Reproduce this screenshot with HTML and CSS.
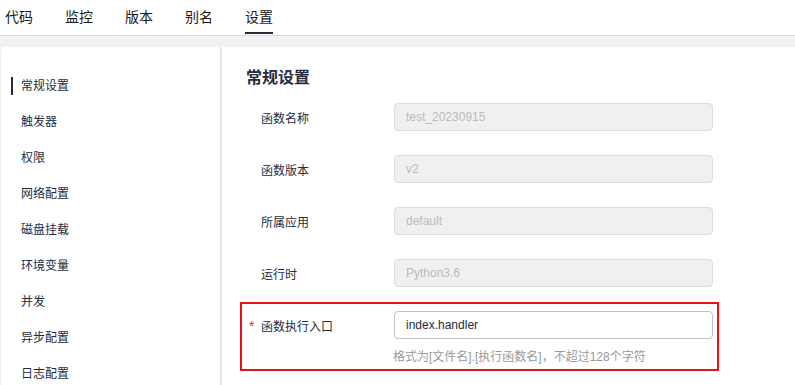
FILE: index.html
```html
<!DOCTYPE html>
<html lang="zh-CN">
<head>
    <meta charset="UTF-8">
    <meta name="viewport" content="width=device-width, initial-scale=1.0">
    <title>函数设置</title>
    <link rel="stylesheet" href="styles.css">
</head>
<body>
    <div class="tabs">
        <a class="tab">代码</a>
        <a class="tab">监控</a>
        <a class="tab">版本</a>
        <a class="tab">别名</a>
        <a class="tab active">设置</a>
    </div>

    <div class="page">
        <div class="panel">
            <ul class="side-menu">
                <li class="active">常规设置</li>
                <li>触发器</li>
                <li>权限</li>
                <li>网络配置</li>
                <li>磁盘挂载</li>
                <li>环境变量</li>
                <li>并发</li>
                <li>异步配置</li>
                <li>日志配置</li>
            </ul>

            <div class="content">
                <h3 class="section-title">常规设置</h3>

                <div class="form">
                    <div class="form-row">
                        <label class="form-label">函数名称</label>
                        <input class="input" type="text" value="test_20230915" disabled>
                    </div>
                    <div class="form-row">
                        <label class="form-label">函数版本</label>
                        <input class="input" type="text" value="v2" disabled>
                    </div>
                    <div class="form-row">
                        <label class="form-label">所属应用</label>
                        <input class="input" type="text" value="default" disabled>
                    </div>
                    <div class="form-row">
                        <label class="form-label">运行时</label>
                        <input class="input" type="text" value="Python3.6" disabled>
                    </div>

                    <div class="highlight">
                        <div class="form-row">
                            <label class="form-label"><span class="required">*</span>函数执行入口</label>
                            <input class="input" type="text" value="index.handler">
                        </div>
                        <div class="form-help">格式为[文件名].[执行函数名]，不超过128个字符</div>
                    </div>
                </div>
            </div>
        </div>
    </div>
</body>
</html>
```

FILE: styles.css
```css
* {
    margin: 0;
    padding: 0;
    box-sizing: border-box;
}

body {
    font-family: 'Liberation Sans', 'Noto Sans CJK SC', sans-serif;
    color: #252b3a;
    background: #f2f2f2;
    height: 385px;
    overflow: hidden;
}

/* Top tabs */
.tabs {
    display: flex;
    align-items: flex-start;
    gap: 32px;
    height: 36px;
    padding-left: 5px;
    background: #fff;
    border-bottom: 1px solid #dcdcdc;
}

.tab {
    height: 34px;
    line-height: 34px;
    font-size: 14px;
    color: #191919;
    border-bottom: 2px solid transparent;
}

.tab.active {
    border-bottom-color: #252b3a;
}

/* Page body */
.page {
    padding: 11px 0 0 1px;
}

.panel {
    display: flex;
    background: #fff;
    border-radius: 4px 0 0 0;
    height: 340px;
}

.side-menu {
    list-style: none;
    width: 221px;
    flex-shrink: 0;
    padding-top: 21px;
    border-right: 2px solid #e4e4e4;
}

.side-menu li {
    position: relative;
    height: 36px;
    line-height: 36px;
    padding-left: 20px;
    font-size: 12px;
    color: #252b3a;
}

.side-menu li.active::before {
    content: '';
    position: absolute;
    left: 10px;
    top: 9px;
    width: 2px;
    height: 18px;
    background: #252b3a;
}

/* Content */
.content {
    flex: 1;
    padding: 19px 0 0 20px;
}

.section-title {
    font-size: 16px;
    line-height: 24px;
    font-weight: bold;
    margin-left: 4px;
    margin-bottom: 13px;
}

.form-row {
    display: flex;
    align-items: center;
    height: 28px;
}

.form-row + .form-row {
    margin-top: 24px;
}

.form-label {
    width: 152px;
    padding-left: 19px;
    font-size: 12px;
    color: #252b3a;
}

.required {
    display: inline-block;
    width: 12px;
    margin-left: -12px;
    color: #e6302f;
    font-size: 14px;
}

.input {
    width: 319px;
    height: 28px;
    padding: 0 11px;
    font-family: inherit;
    font-size: 12px;
    color: #252b3a;
    background: #fff;
    border: 1px solid #c2c2c2;
    border-radius: 4px;
    outline: none;
}

.input:disabled {
    color: #bbb;
    background: #f0f0f0;
    border-color: #dcdcdc;
}

/* Red box round the entry row */
.highlight {
    width: 479px;
    margin: 15px 0 0 -2px;
    padding: 7px 0 3px 0;
    border: 2px solid #e3131d;
}

.form-help {
    margin: 9px 0 0 151px;
    line-height: 18px;
    font-size: 12px;
    color: #999;
}
```
